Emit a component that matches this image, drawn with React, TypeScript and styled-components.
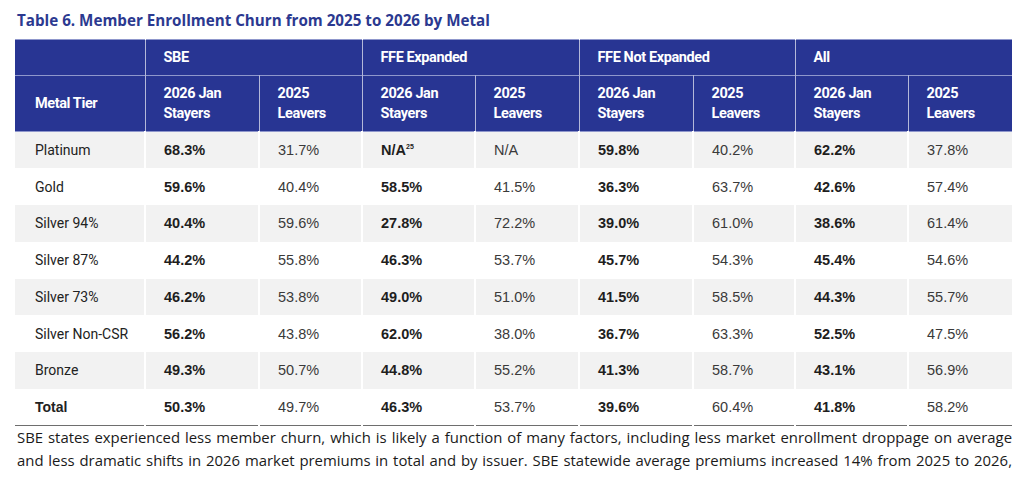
import React from 'react';
import styled, { createGlobalStyle } from 'styled-components';

const GlobalStyle = createGlobalStyle`
  html, body {
    margin: 0;
    padding: 0;
    background: #ffffff;
  }
`;

const NAVY = '#283593';

interface Row {
  tier: string;
  values: string[];
  note?: string;
  total?: boolean;
}

const groups = ['SBE', 'FFE Expanded', 'FFE Not Expanded', 'All'];
const widths = [130, 114, 103, 113, 104, 114, 102, 113, 104];

const rows: Row[] = [
  { tier: 'Platinum', values: ['68.3%', '31.7%', 'N/A', 'N/A', '59.8%', '40.2%', '62.2%', '37.8%'], note: '25' },
  { tier: 'Gold', values: ['59.6%', '40.4%', '58.5%', '41.5%', '36.3%', '63.7%', '42.6%', '57.4%'] },
  { tier: 'Silver 94%', values: ['40.4%', '59.6%', '27.8%', '72.2%', '39.0%', '61.0%', '38.6%', '61.4%'] },
  { tier: 'Silver 87%', values: ['44.2%', '55.8%', '46.3%', '53.7%', '45.7%', '54.3%', '45.4%', '54.6%'] },
  { tier: 'Silver 73%', values: ['46.2%', '53.8%', '49.0%', '51.0%', '41.5%', '58.5%', '44.3%', '55.7%'] },
  { tier: 'Silver Non-CSR', values: ['56.2%', '43.8%', '62.0%', '38.0%', '36.7%', '63.3%', '52.5%', '47.5%'] },
  { tier: 'Bronze', values: ['49.3%', '50.7%', '44.8%', '55.2%', '41.3%', '58.7%', '43.1%', '56.9%'] },
  { tier: 'Total', values: ['50.3%', '49.7%', '46.3%', '53.7%', '39.6%', '60.4%', '41.8%', '58.2%'], total: true },
];

const App = () => {
  return (
    <>
      <GlobalStyle />
      <Page>
        <Title>Table 6. Member Enrollment Churn from 2025 to 2026 by Metal</Title>
        <Table>
          <colgroup>
            {widths.map((w, i) => (
              <col key={i} style={{ width: w }} />
            ))}
          </colgroup>
          <thead>
            <GroupRow>
              <HeadCell />
              {groups.map((g) => (
                <HeadCell key={g} colSpan={2} $divider>
                  {g}
                </HeadCell>
              ))}
            </GroupRow>
            <SubRow>
              <HeadCell $first>Metal Tier</HeadCell>
              {groups.map((g) => (
                <React.Fragment key={g}>
                  <HeadCell $divider>
                    2026 Jan
                    <br />
                    Stayers
                  </HeadCell>
                  <HeadCell $divider>
                    2025
                    <br />
                    Leavers
                  </HeadCell>
                </React.Fragment>
              ))}
            </SubRow>
          </thead>
          <tbody>
            {rows.map((r, ri) => (
              <BodyRow key={r.tier} $striped={ri % 2 === 0 && !r.total}>
                <TierCell $total={r.total}>{r.tier}</TierCell>
                {r.values.map((v, i) => (
                  <ValueCell key={i} $bold={i % 2 === 0}>
                    {v}
                    {r.note && i === 2 ? <Sup>{r.note}</Sup> : null}
                  </ValueCell>
                ))}
              </BodyRow>
            ))}
          </tbody>
        </Table>
        <Paragraph>
          SBE states experienced less member churn, which is likely a function of many factors, including less
          market enrollment droppage on average
          <br />
          and less dramatic shifts in 2026 market premiums in total and by issuer. SBE statewide average premiums
          increased 14% from 2025 to 2026,
        </Paragraph>
      </Page>
    </>
  );
};

export default App;

const Page = styled.div`
  padding: 10px 12px 0 15px;
  width: 1024px;
  box-sizing: border-box;
`;

const Title = styled.div`
  font-family: 'Open Sans', 'Noto Sans', sans-serif;
  font-weight: 700;
  font-size: 15.2px;
  line-height: 20px;
  color: #2b3990;
  padding-left: 2px;
  margin-bottom: 9px;
`;

const Table = styled.table`
  width: 997px;
  border-collapse: collapse;
  table-layout: fixed;
  border-bottom: 1.5px solid #6e6e6e;
`;

const GroupRow = styled.tr`
  height: 36px;
  background: ${NAVY};
  border-top: 1px solid #8f97cc;
  border-bottom: 1px solid #8f97cc;
`;

const SubRow = styled.tr`
  height: 56px;
  background: ${NAVY};
  border-bottom: 1px solid #8f97cc;
`;

const HeadCell = styled.th<{ $divider?: boolean; $first?: boolean }>`
  font-family: Roboto, 'Liberation Sans', sans-serif;
  font-weight: 700;
  font-size: 14.5px;
  letter-spacing: -0.4px;
  line-height: 20px;
  color: #ffffff;
  text-align: left;
  vertical-align: middle;
  padding: 0 0 0 ${(p) => (p.$first ? 20 : 18)}px;
  border-left: ${(p) => (p.$divider ? '1px solid rgba(255, 255, 255, 0.65)' : 'none')};
`;

const BodyRow = styled.tr<{ $striped?: boolean }>`
  height: 36.75px;
  background: ${(p) => (p.$striped ? '#f2f2f2' : '#ffffff')};
`;

const TierCell = styled.td<{ $total?: boolean }>`
  font-family: ${(p) => (p.$total ? "'Liberation Sans', Arial, sans-serif" : 'Roboto, sans-serif')};
  font-weight: ${(p) => (p.$total ? 700 : 400)};
  font-size: 14px;
  color: #222222;
  padding: 0 0 0 20px;
  vertical-align: middle;
`;

const ValueCell = styled.td<{ $bold?: boolean }>`
  font-family: 'Liberation Sans', Arial, sans-serif;
  font-weight: ${(p) => (p.$bold ? 700 : 400)};
  font-size: 14.5px;
  color: ${(p) => (p.$bold ? '#1e1e1e' : '#3a3a3a')};
  padding: 0 0 0 18px;
  vertical-align: middle;
  border-left: 2px solid #ffffff;
`;

const Sup = styled.sup`
  font-size: 7px;
  vertical-align: 6px;
  line-height: 0;
`;

const Paragraph = styled.p`
  margin: 0;
  padding-left: 2px;
  width: 995px;
  font-family: 'Open Sans', 'Noto Sans', sans-serif;
  font-size: 14.9px;
  line-height: 22.5px;
  color: #1a1a1a;
  text-align: justify;
  text-align-last: justify;
`;
